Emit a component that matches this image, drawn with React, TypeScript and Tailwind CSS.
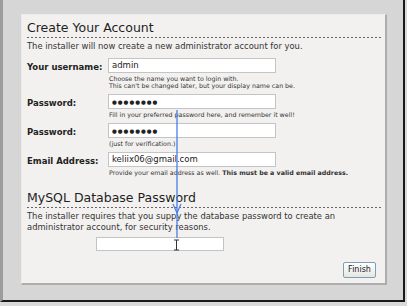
import React from "react";

const font = { fontFamily: '"DejaVu Sans", Verdana, sans-serif' };

const Dashed = () => (
  <div className="h-px w-full bg-[repeating-linear-gradient(to_right,#666_0,#666_2px,transparent_2px,transparent_4px)]" />
);

type RowProps = {
  label: string;
  value: string;
  password?: boolean;
  children: React.ReactNode;
};

const FieldRow = ({ label, value, password, children }: RowProps) => (
  <div className="flex">
    <div className="w-[81px] shrink-0 pt-[3px] text-[8.5px] font-bold text-[#222]">{label}</div>
    <div className="flex flex-col">
      <div className="h-[15px] w-[168px] border border-[#c4c4c4] bg-white pl-[3px] text-[8.5px] leading-[13px] text-[#222]">
        {password ? <span className="text-[5.5px] font-bold tracking-[1px]">●●●●●●●●</span> : value}
      </div>
      <div className="pl-px pt-[2px] text-[6.3px] leading-[7px] text-[#333]">{children}</div>
    </div>
  </div>
);

const App = () => {
  return (
    <div className="h-[306px] w-[407px] bg-[#dadada]" style={font}>
      <div className="relative h-[302px] w-[405px] border-b-2 border-l-[3px] border-r-2 border-b-[#1a1a1a] border-l-[#9c9c9c] border-r-[#1a1a1a] bg-[#d6d6d6] pl-[18px] pt-[14px]">
        <div className="flex h-[271px] w-[366px] flex-col border-b-2 border-l border-r-2 border-t border-b-[#adadad] border-l-[#ececec] border-r-[#adadad] border-t-[#ececec] bg-[#f2f1ef] pl-[5px] pr-[2px]">
          <div className="pt-[5px] text-[12.5px] leading-[16px] text-[#1e1e1e]">Create Your Account</div>
          <div className="pt-px">
            <Dashed />
          </div>
          <div className="pt-[3px] text-[8.4px] leading-[11px] text-[#333]">
            The installer will now create a new administrator account for you.
          </div>

          <div className="mt-[6px] flex flex-col gap-[5px]">
            <FieldRow label="Your username:" value="admin">
              <div>Choose the name you want to login with.</div>
              <div>This can't be changed later, but your display name can be.</div>
            </FieldRow>
            <FieldRow label="Password:" value="" password>
              Fill in your preferred password here, and remember it well!
            </FieldRow>
            <FieldRow label="Password:" value="" password>
              (just for verification.)
            </FieldRow>
            <FieldRow label="Email Address:" value="keliix06@gmail.com">
              Provide your email address as well. <span className="font-bold">This must be a valid email address.</span>
            </FieldRow>
          </div>

          <div className="mt-[14px] text-[12.5px] leading-[16px] text-[#1e1e1e]">MySQL Database Password</div>
          <div className="pt-px">
            <Dashed />
          </div>
          <div className="pt-[3px] text-[8.4px] leading-[11px] text-[#333]">
            The installer requires that you suppy the database password to create an
            <br />
            administrator account, for security reasons.
          </div>

          <div className="mt-[4px] pl-[69px]">
            <div className="h-[14px] w-[128px] border border-[#c4c4c4] bg-white" />
          </div>

          <div className="mt-[11px] flex justify-end pr-[7px]">
            <button className="h-[16px] w-[33px] rounded-[2px] border border-[#7f9db9] bg-[linear-gradient(#ffffff,#e6e6e0)] text-[8px] leading-[14px] text-[#222]">
              Finish
            </button>
          </div>
        </div>

        <svg className="absolute left-0 top-0" width="405" height="302" viewBox="0 0 405 302">
          <line x1="174" y1="110" x2="174" y2="238" stroke="#4a7de6" strokeWidth="1.3" />
          <path d="M170 204 L174 213 L178 204" fill="none" stroke="#4a7de6" strokeWidth="1.2" />
          <path d="M171 240 H176 M173.5 240 V250 M171 250 H176" stroke="#333" strokeWidth="1" fill="none" />
        </svg>
      </div>
    </div>
  );
};

export default App;
